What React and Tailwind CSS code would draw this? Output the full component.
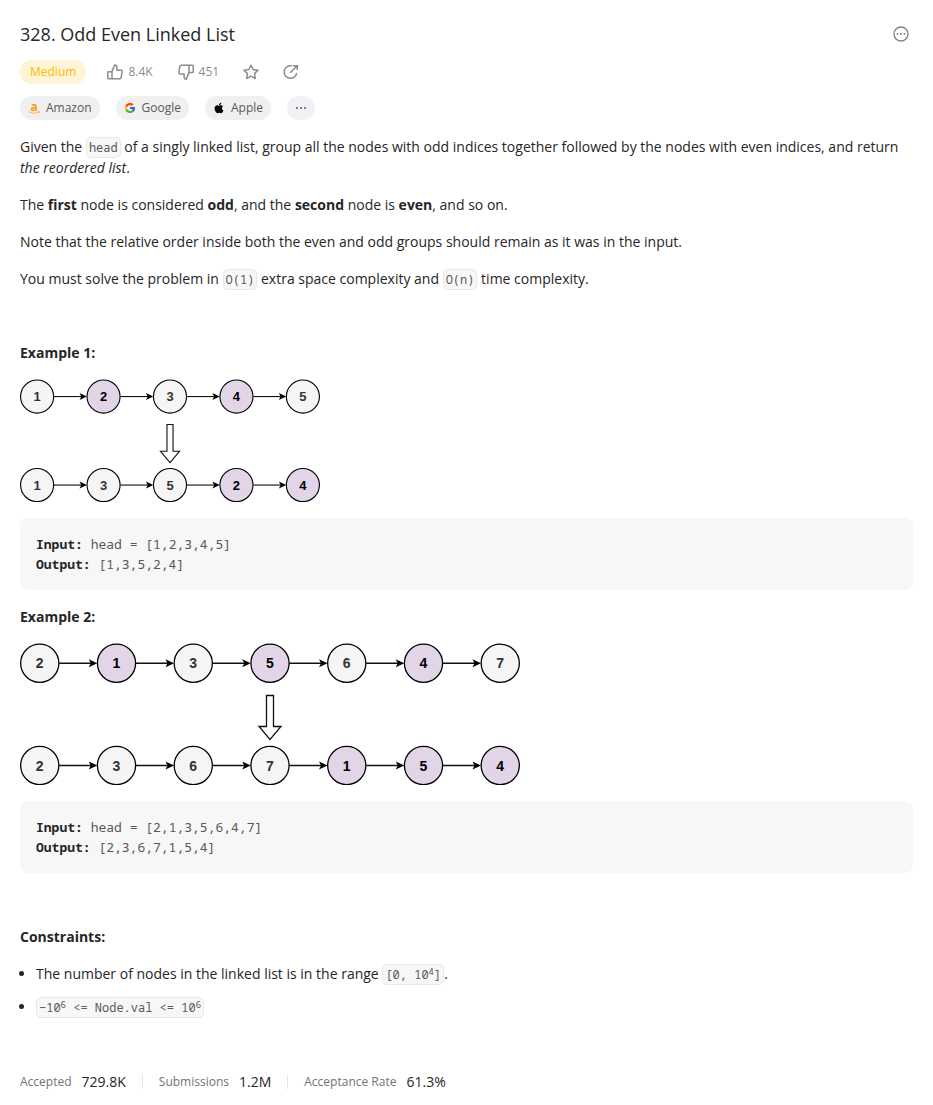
import { FaApple } from "react-icons/fa";
import { FcGoogle } from "react-icons/fc";

function Code({ children }) {
  return (
    <code className="rounded-[5px] border border-[#e8e8e8] bg-[#f7f7f7] px-0.5 py-px font-['Noto_Sans_Mono','DejaVu_Sans_Mono',monospace] text-xs leading-4 text-[#595959]">
      {children}
    </code>
  );
}

function Sup({ children }) {
  return <sup className="relative -top-1 align-baseline text-[9px] leading-none">{children}</sup>;
}

function LinkedListRow({ values, shaded, y, fontSize }) {
  return values.map((v, i) => {
    const cx = 39.5 + i * 153.5;
    const on = shaded.includes(v);
    return (
      <g key={v}>
        {i < values.length - 1 && (
          <>
            <path d={`M${cx + 39} ${y}H${cx + 104}`} stroke="#111" strokeWidth="2.6" />
            <path d={`M${cx + 115} ${y}l-17 -8 4 8 -4 8z`} fill="#000" />
          </>
        )}
        <circle cx={cx} cy={y} r="38.2" fill={on ? "#e1d5e7" : "#f5f5f5"} stroke="#000" strokeWidth="2.6" />
        <text
          x={cx}
          y={y + fontSize * 0.36}
          textAnchor="middle"
          fontSize={fontSize}
          fontWeight="700"
          fontFamily="'Liberation Sans', Arial, sans-serif"
          fill={on ? "#000" : "#333"}
        >
          {v}
        </text>
      </g>
    );
  });
}

function Diagram({ before, after, shaded, fontSize, className }) {
  const width = 79 + (before.length - 1) * 153.5;
  const mid = width / 2;
  return (
    <svg
      viewBox={`0 0 ${width} 284`}
      className={className}
      role="img"
      aria-label="Linked list before and after regrouping"
    >
      <LinkedListRow values={before} shaded={shaded} y={40.5} fontSize={fontSize} />
      <path d={`M${mid - 7} 105h14v62h15l-22 26 -22 -26h15z`} fill="#fff" stroke="#111" strokeWidth="2.6" />
      <LinkedListRow values={after} shaded={shaded} y={245} fontSize={fontSize} />
    </svg>
  );
}

function Example({ title, input, output, children }) {
  return (
    <section className="mb-4">
      <h2 className="mb-4 font-bold">{title}</h2>
      {children}
      <pre className="mt-4 overflow-x-auto rounded-lg bg-[#f7f7f7] p-4 font-['Noto_Sans_Mono','DejaVu_Sans_Mono',monospace] text-[13px] leading-5 text-[#595959]">
        <strong className="text-[#262626]">Input:</strong> {input + "\n"}
        <strong className="text-[#262626]">Output:</strong> {output}
      </pre>
    </section>
  );
}

function ThumbIcon({ down }) {
  return (
    <svg
      viewBox="0 0 24 24"
      className={down ? "size-[18px] rotate-180" : "size-[18px]"}
      fill="none"
      stroke="currentColor"
      strokeWidth="2"
      strokeLinejoin="round"
      aria-hidden="true"
    >
      <path d="M8 11.500V21H3.500A1.200 1.200 0 0 1 2.300 19.800V12.700a1.200 1.200 0 0 1 1.200-1.200z" />
      <path d="M8 11.500 11.500 2.500a3 3 0 0 1 3 3v4h5.200a1.800 1.800 0 0 1 1.800 2.100l-1.200 7.700A2 2 0 0 1 18.300 21H8" />
    </svg>
  );
}

function StarIcon() {
  return (
    <svg viewBox="0 0 16 16" className="size-4" fill="none" stroke="currentColor" strokeWidth="1.500" strokeLinejoin="round" aria-hidden="true">
      <path d="M8 1.200 10.100 5.500 15 6.200 11.500 9.600 12.300 14.500 8 12.200 3.700 14.500 4.500 9.600 1 6.200 5.900 5.500z" />
    </svg>
  );
}

function ShareIcon() {
  return (
    <svg viewBox="0 0 16 16" className="size-4" fill="none" stroke="currentColor" strokeWidth="1.500" aria-hidden="true">
      <path d="M9 1.900A6.300 6.300 0 1 0 13.700 8.800" />
      <path d="M7.200 8.800 14 2M10 1.700h4.300V6" />
    </svg>
  );
}

function AmazonIcon() {
  return (
    <svg viewBox="0 0 12 20" className="h-5 w-3" aria-hidden="true">
      <text x="6" y="12.500" textAnchor="middle" fontSize="12" fontWeight="700" fontFamily="'Open Sans', sans-serif" fill="#f90">
        a
      </text>
      <path d="M0.500 13.700Q5.500 16.600 10.600 14.200M9.600 13.300l1.800.1-.5 1.700" fill="none" stroke="#ffb84d" strokeWidth="1" />
    </svg>
  );
}

function Company({ icon, name }) {
  return (
    <a href="#" className="flex h-6 items-center gap-1.5 rounded-full bg-[#f0f0f0] px-2 text-xs text-[#595959]">
      {icon}
      {name}
    </a>
  );
}

function Stat({ label, value }) {
  return (
    <div className="flex items-center gap-2.5">
      <dt className="text-xs text-[#737373]">{label}</dt>
      <dd className="text-sm">{value}</dd>
    </div>
  );
}

function Divider() {
  return <div className="mx-4 h-3.5 w-px bg-[#e5e5e5]" aria-hidden="true" />;
}

export default function App() {
  return (
    <main className="bg-white px-5 pt-5 font-['Open_Sans','Noto_Sans',sans-serif] text-sm leading-[21px] text-[#262626]">
      <header>
        <div className="flex h-7 items-center justify-between pr-1">
          <h1 className="text-lg">328. Odd Even Linked List</h1>
          <button type="button" aria-label="More options" className="text-[#808080]">
            <svg viewBox="0 0 16 16" className="size-4" aria-hidden="true">
              <circle cx="8" cy="8" r="7" fill="none" stroke="currentColor" strokeWidth="1.300" />
              <g fill="currentColor">
                <circle cx="4.500" cy="8" r="0.900" />
                <circle cx="8" cy="8" r="0.900" />
                <circle cx="11.500" cy="8" r="0.900" />
              </g>
            </svg>
          </button>
        </div>

        <div className="mt-3 flex h-6 items-center text-xs text-[#8c8c8c]">
          <span className="mr-5 flex h-6 items-center rounded-full bg-[#fff4d6] px-2.5 text-[#ffb800]">Medium</span>
          <div className="flex items-center gap-6">
            <button type="button" className="flex items-center gap-1" aria-label="Like, 8.4K">
              <ThumbIcon />
              8.4K
            </button>
            <button type="button" className="flex items-center gap-1" aria-label="Dislike, 451">
              <ThumbIcon down />
              451
            </button>
            <button type="button" aria-label="Add to favorites">
              <StarIcon />
            </button>
            <button type="button" aria-label="Share">
              <ShareIcon />
            </button>
          </div>
        </div>

        <nav aria-label="Companies" className="mt-3 flex gap-4">
          <Company icon={<AmazonIcon />} name="Amazon" />
          <Company icon={<FcGoogle className="size-3" />} name="Google" />
          <Company icon={<FaApple className="size-3 text-black" />} name="Apple" />
          <button type="button" aria-label="More companies" className="flex h-6 w-7 items-center justify-center rounded-full bg-[#f0f2f5] text-[#595959]">
            <svg viewBox="0 0 12 12" className="size-3" fill="currentColor" aria-hidden="true">
              <circle cx="2" cy="6" r="1" />
              <circle cx="6" cy="6" r="1" />
              <circle cx="10" cy="6" r="1" />
            </svg>
          </button>
        </nav>
      </header>

      <article className="mt-4">
        <p className="mb-4">
          Given the <Code>head</Code> of a singly linked list, group all the nodes with odd indices together followed by
          the nodes with even indices, and return <em>the reordered list</em>.
        </p>
        <p className="mb-4">
          The <strong>first</strong> node is considered <strong>odd</strong>, and the <strong>second</strong> node is{" "}
          <strong>even</strong>, and so on.
        </p>
        <p className="mb-4">
          Note that the relative order inside both the even and odd groups should remain as it was in the input.
        </p>
        <p className="mb-[53px]">
          You must solve the problem in <Code>O(1)</Code> extra space complexity and <Code>O(n)</Code> time complexity.
        </p>

        <Example title="Example 1:" input="head = [1,2,3,4,5]" output="[1,3,5,2,4]">
          <Diagram
            before={[1, 2, 3, 4, 5]}
            after={[1, 3, 5, 2, 4]}
            shaded={[2, 4]}
            fontSize={30}
            className="w-[300px] max-w-full"
          />
        </Example>

        <Example title="Example 2:" input="head = [2,1,3,5,6,4,7]" output="[2,3,6,7,1,5,4]">
          <Diagram
            before={[2, 1, 3, 5, 6, 4, 7]}
            after={[2, 3, 6, 7, 1, 5, 4]}
            shaded={[1, 5, 4]}
            fontSize={28}
            className="w-[500px] max-w-full"
          />
        </Example>

        <section className="mt-[53px]">
          <h2 className="mb-4 font-bold">Constraints:</h2>
          <ul className="flex list-outside list-disc flex-col gap-3 pl-4">
            <li>
              The number of nodes in the linked list is in the range{" "}
              <Code>
                [0, 10<Sup>4</Sup>]
              </Code>
              .
            </li>
            <li>
              <Code>
                −10<Sup>6</Sup> &lt;= Node.val &lt;= 10<Sup>6</Sup>
              </Code>
            </li>
          </ul>
        </section>
      </article>

      <dl className="mt-[55px] flex flex-wrap items-center pb-3">
        <Stat label="Accepted" value="729.8K" />
        <Divider />
        <Stat label="Submissions" value="1.2M" />
        <Divider />
        <Stat label="Acceptance Rate" value="61.3%" />
      </dl>
    </main>
  );
}
